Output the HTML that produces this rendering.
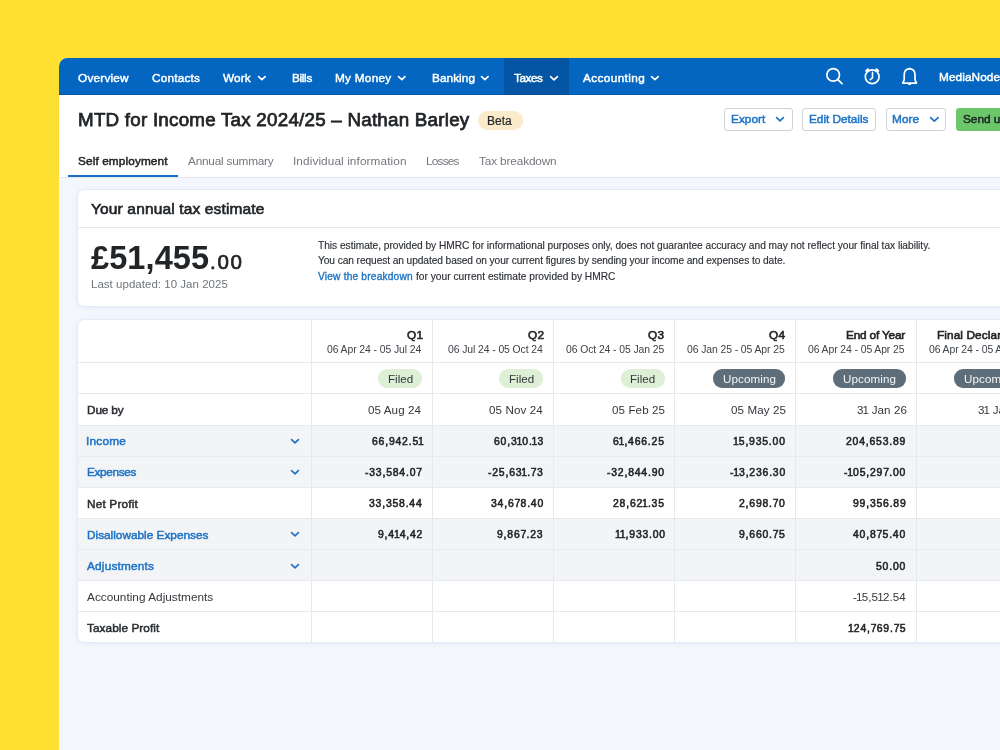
<!DOCTYPE html>
<html><head><meta charset="utf-8"><title>MTD for Income Tax</title><style>
html,body{margin:0;padding:0;}
body{width:1000px;height:750px;overflow:hidden;position:relative;background:#FDE032;font-family:"Liberation Sans", sans-serif;}
.t{position:absolute;white-space:nowrap;will-change:transform;}
.btn{position:absolute;top:108.2px;height:22.5px;box-sizing:border-box;border:1px solid #CDD2D8;border-radius:3px;background:#fff}
.b{position:absolute;top:369.4px;height:18.2px;border-radius:9.1px}
.card{position:absolute;left:78px;width:960px;border-radius:6px;background:#fff;box-shadow:0 0 0 0.5px rgba(210,222,240,0.5),0 1px 6px rgba(110,150,215,0.15)}
</style></head><body>
<div style="position:absolute;left:59px;top:58px;width:1000px;height:720px;background:#F3F7FD;border-top-left-radius:8.5px;overflow:hidden"></div>
<div style="position:absolute;left:59px;top:58px;width:1000px;height:37px;background:#0466C0;border-top-left-radius:8.5px"></div>
<div style="position:absolute;left:504px;top:58px;width:65px;height:37px;background:#0455A3"></div>
<div style="position:absolute;left:59px;top:94px;width:1000px;height:1px;background:rgba(0,50,110,0.28)"></div>
<div style="position:absolute;left:59px;top:95px;width:1000px;height:82px;background:#fff;border-bottom:1px solid #E4E8EE"></div>
<div style="position:absolute;left:68px;top:175px;width:110px;height:2px;background:#1C70C4"></div>
<div style="position:absolute;left:478px;top:111.4px;width:45px;height:18.2px;border-radius:9.1px;background:#FCEBCB"></div>
<div class="btn" style="left:724.3px;width:68.4px"></div>
<div class="btn" style="left:802.3px;width:73.5px"></div>
<div class="btn" style="left:885.5px;width:60.9px"></div>
<div class="btn" style="left:956.2px;width:80px;background:#6CC66A;border-color:#6CC66A"></div>
<div class="card" style="top:190.4px;height:116px"></div>
<div style="position:absolute;left:78px;top:226.5px;width:960px;height:1px;background:#E6E9ED"></div>
<div class="card" style="top:319.7px;height:322.6px"></div>
<div style="position:absolute;left:78px;top:425.000px;width:960px;height:31.000px;background:#F3F4F6"></div><div style="position:absolute;left:78px;top:456.000px;width:960px;height:31.300px;background:#F3F4F6"></div><div style="position:absolute;left:78px;top:518.300px;width:960px;height:31.200px;background:#F3F4F6"></div><div style="position:absolute;left:78px;top:549.500px;width:960px;height:31.300px;background:#F3F4F6"></div><div style="position:absolute;left:311.00px;top:319.7px;width:1px;height:322.6px;background:#E6E9EE"></div><div style="position:absolute;left:432.00px;top:319.7px;width:1px;height:322.6px;background:#E6E9EE"></div><div style="position:absolute;left:553.00px;top:319.7px;width:1px;height:322.6px;background:#E6E9EE"></div><div style="position:absolute;left:674.40px;top:319.7px;width:1px;height:322.6px;background:#E6E9EE"></div><div style="position:absolute;left:795.00px;top:319.7px;width:1px;height:322.6px;background:#E6E9EE"></div><div style="position:absolute;left:915.50px;top:319.7px;width:1px;height:322.6px;background:#E6E9EE"></div><div style="position:absolute;left:78px;top:362.00px;width:960px;height:1px;background:#E6E9EE"></div><div style="position:absolute;left:78px;top:393.00px;width:960px;height:1px;background:#E6E9EE"></div><div style="position:absolute;left:78px;top:424.50px;width:960px;height:1px;background:#E6E9EE"></div><div style="position:absolute;left:78px;top:455.50px;width:960px;height:1px;background:#E6E9EE"></div><div style="position:absolute;left:78px;top:486.80px;width:960px;height:1px;background:#E6E9EE"></div><div style="position:absolute;left:78px;top:517.80px;width:960px;height:1px;background:#E6E9EE"></div><div style="position:absolute;left:78px;top:549.00px;width:960px;height:1px;background:#E6E9EE"></div><div style="position:absolute;left:78px;top:580.30px;width:960px;height:1px;background:#E6E9EE"></div><div style="position:absolute;left:78px;top:611.10px;width:960px;height:1px;background:#E6E9EE"></div>
<div class="b" style="left:378.30px;width:44.2px;background:#DDEFD4"></div><div class="b" style="left:499.30px;width:44.2px;background:#DDEFD4"></div><div class="b" style="left:620.70px;width:44.2px;background:#DDEFD4"></div><div class="b" style="left:712.90px;width:72.6px;background:#5D6D79"></div><div class="b" style="left:833.40px;width:72.6px;background:#5D6D79"></div><div class="b" style="left:954.40px;width:72.6px;background:#5D6D79"></div>
<svg style="position:absolute;left:257.00px;top:75.16px" width="9.80" height="6.29" viewBox="-1 -1 9.80 6.29"><path d="M0.6 0.6 L3.90 3.69 L7.20 0.6" fill="none" stroke="#FFFFFF" stroke-width="1.7" stroke-linecap="round" stroke-linejoin="round"/></svg><svg style="position:absolute;left:397.40px;top:75.21px" width="9.60" height="6.18" viewBox="-1 -1 9.60 6.18"><path d="M0.6 0.6 L3.80 3.58 L7.00 0.6" fill="none" stroke="#FFFFFF" stroke-width="1.7" stroke-linecap="round" stroke-linejoin="round"/></svg><svg style="position:absolute;left:479.70px;top:75.18px" width="9.70" height="6.23" viewBox="-1 -1 9.70 6.23"><path d="M0.6 0.6 L3.85 3.63 L7.10 0.6" fill="none" stroke="#FFFFFF" stroke-width="1.7" stroke-linecap="round" stroke-linejoin="round"/></svg><svg style="position:absolute;left:549.00px;top:75.10px" width="10.00" height="6.40" viewBox="-1 -1 10.00 6.40"><path d="M0.6 0.6 L4.00 3.80 L7.40 0.6" fill="none" stroke="#FFFFFF" stroke-width="1.7" stroke-linecap="round" stroke-linejoin="round"/></svg><svg style="position:absolute;left:650.00px;top:75.16px" width="9.80" height="6.29" viewBox="-1 -1 9.80 6.29"><path d="M0.6 0.6 L3.90 3.69 L7.20 0.6" fill="none" stroke="#FFFFFF" stroke-width="1.7" stroke-linecap="round" stroke-linejoin="round"/></svg><svg style="position:absolute;left:774.70px;top:116.30px" width="10.00" height="6.40" viewBox="-1 -1 10.00 6.40"><path d="M0.6 0.6 L4.00 3.80 L7.40 0.6" fill="none" stroke="#1F74C6" stroke-width="1.7" stroke-linecap="round" stroke-linejoin="round"/></svg><svg style="position:absolute;left:928.50px;top:116.11px" width="10.70" height="6.79" viewBox="-1 -1 10.70 6.79"><path d="M0.6 0.6 L4.35 4.19 L8.10 0.6" fill="none" stroke="#1F74C6" stroke-width="1.7" stroke-linecap="round" stroke-linejoin="round"/></svg><svg style="position:absolute;left:290.00px;top:438.00px" width="10.00" height="6.40" viewBox="-1 -1 10.00 6.40"><path d="M0.6 0.6 L4.00 3.80 L7.40 0.6" fill="none" stroke="#1F74C6" stroke-width="1.7" stroke-linecap="round" stroke-linejoin="round"/></svg><svg style="position:absolute;left:290.00px;top:469.00px" width="10.00" height="6.40" viewBox="-1 -1 10.00 6.40"><path d="M0.6 0.6 L4.00 3.80 L7.40 0.6" fill="none" stroke="#1F74C6" stroke-width="1.7" stroke-linecap="round" stroke-linejoin="round"/></svg><svg style="position:absolute;left:290.00px;top:531.30px" width="10.00" height="6.40" viewBox="-1 -1 10.00 6.40"><path d="M0.6 0.6 L4.00 3.80 L7.40 0.6" fill="none" stroke="#1F74C6" stroke-width="1.7" stroke-linecap="round" stroke-linejoin="round"/></svg><svg style="position:absolute;left:290.00px;top:562.50px" width="10.00" height="6.40" viewBox="-1 -1 10.00 6.40"><path d="M0.6 0.6 L4.00 3.80 L7.40 0.6" fill="none" stroke="#1F74C6" stroke-width="1.7" stroke-linecap="round" stroke-linejoin="round"/></svg>

<svg style="position:absolute;left:820px;top:62px" width="30" height="30" viewBox="0 0 30 30">
 <circle cx="13.2" cy="12.9" r="6.3" fill="none" stroke="#fff" stroke-width="1.7"/>
 <path d="M17.9 17.6 L22 21.6" stroke="#fff" stroke-width="1.8" stroke-linecap="round"/>
</svg>
<svg style="position:absolute;left:857px;top:62px" width="30" height="30" viewBox="0 0 30 30">
 <circle cx="15.2" cy="14.7" r="6.9" fill="none" stroke="#fff" stroke-width="1.7"/>
 <path d="M15.5 10.3 V15.8 L13.2 17.6" fill="none" stroke="#fff" stroke-width="1.6" stroke-linecap="round" stroke-linejoin="round"/>
 <path d="M9.3 8.9 L11 7.4" stroke="#fff" stroke-width="2.2" stroke-linecap="round"/>
 <path d="M21.1 8.9 L19.4 7.4" stroke="#fff" stroke-width="2.2" stroke-linecap="round"/>
</svg>
<svg style="position:absolute;left:895px;top:62px" width="30" height="30" viewBox="0 0 30 30">
 <path d="M14.6 6.7 C11.3 7 9.2 9.6 9.2 13 V17.8 L7.7 21.1 H21.5 L20 17.8 V13 C20 9.6 17.9 7 14.6 6.7 Z" fill="none" stroke="#fff" stroke-width="1.7" stroke-linejoin="round"/>
 <path d="M14.6 5.6 L15.6 6.9 H13.6 Z" fill="#fff"/>
 <path d="M12.8 21.5 A1.8 1.8 0 0 0 16.4 21.5 Z" fill="#fff"/>
</svg>

<div class="t" style="left:77.80px;top:71px;font-size:11.8px;line-height:14.16px;font-weight:normal;color:#FFFFFF;letter-spacing:0.208px;-webkit-text-stroke:0.45px #FFFFFF;">Overview</div><div class="t" style="left:151.70px;top:71px;font-size:11.8px;line-height:14.16px;font-weight:normal;color:#FFFFFF;letter-spacing:0.206px;-webkit-text-stroke:0.45px #FFFFFF;">Contacts</div><div class="t" style="left:223.00px;top:71px;font-size:11.8px;line-height:14.16px;font-weight:normal;color:#FFFFFF;letter-spacing:0.130px;-webkit-text-stroke:0.45px #FFFFFF;">Work</div><div class="t" style="left:291.60px;top:71px;font-size:11.8px;line-height:14.16px;font-weight:normal;color:#FFFFFF;letter-spacing:-0.333px;-webkit-text-stroke:0.45px #FFFFFF;">Bills</div><div class="t" style="left:334.90px;top:71px;font-size:11.8px;line-height:14.16px;font-weight:normal;color:#FFFFFF;letter-spacing:0.255px;-webkit-text-stroke:0.45px #FFFFFF;">My Money</div><div class="t" style="left:431.60px;top:71px;font-size:11.8px;line-height:14.16px;font-weight:normal;color:#FFFFFF;letter-spacing:0.055px;-webkit-text-stroke:0.45px #FFFFFF;">Banking</div><div class="t" style="left:514.00px;top:71px;font-size:11.8px;line-height:14.16px;font-weight:normal;color:#FFFFFF;letter-spacing:-0.480px;-webkit-text-stroke:0.45px #FFFFFF;">Taxes</div><div class="t" style="left:583.00px;top:71px;font-size:11.8px;line-height:14.16px;font-weight:normal;color:#FFFFFF;letter-spacing:0.377px;-webkit-text-stroke:0.45px #FFFFFF;">Accounting</div><div class="t" style="left:938.90px;top:70px;font-size:11.8px;line-height:14.16px;font-weight:normal;color:#FFFFFF;letter-spacing:0.091px;-webkit-text-stroke:0.45px #FFFFFF;">MediaNode</div><div class="t" style="left:77.80px;top:109px;font-size:18.8px;line-height:22.56px;font-weight:normal;color:#222528;letter-spacing:0.232px;-webkit-text-stroke:0.75px #222528;">MTD for Income Tax 2024/25 – Nathan Barley</div><div class="t" style="left:487.40px;top:114px;font-size:12px;line-height:14.40px;font-weight:normal;color:#222528;letter-spacing:-0.004px;-webkit-text-stroke:0.2px #222528;">Beta</div><div class="t" style="left:731.00px;top:112px;font-size:11.8px;line-height:14.16px;font-weight:normal;color:#1F74C6;letter-spacing:0.037px;-webkit-text-stroke:0.5px #1F74C6;">Export</div><div class="t" style="left:809.30px;top:112px;font-size:11.8px;line-height:14.16px;font-weight:normal;color:#1F74C6;letter-spacing:-0.024px;-webkit-text-stroke:0.5px #1F74C6;">Edit Details</div><div class="t" style="left:892.40px;top:112px;font-size:11.8px;line-height:14.16px;font-weight:normal;color:#1F74C6;letter-spacing:0.061px;-webkit-text-stroke:0.5px #1F74C6;">More</div><div class="t" style="left:963.00px;top:112px;font-size:11.8px;line-height:14.16px;font-weight:normal;color:#222528;letter-spacing:0.000px;-webkit-text-stroke:0.5px #222528;">Send updates</div><div class="t" style="left:77.70px;top:154px;font-size:11.8px;line-height:14.16px;font-weight:normal;color:#222528;letter-spacing:0.116px;-webkit-text-stroke:0.5px #222528;">Self employment</div><div class="t" style="left:187.90px;top:154px;font-size:11.8px;line-height:14.16px;font-weight:normal;color:#73787E;letter-spacing:-0.216px;">Annual summary</div><div class="t" style="left:292.50px;top:154px;font-size:11.8px;line-height:14.16px;font-weight:normal;color:#73787E;letter-spacing:0.094px;">Individual information</div><div class="t" style="left:425.50px;top:154px;font-size:11.8px;line-height:14.16px;font-weight:normal;color:#73787E;letter-spacing:-0.776px;">Losses</div><div class="t" style="left:478.90px;top:154px;font-size:11.8px;line-height:14.16px;font-weight:normal;color:#73787E;letter-spacing:-0.140px;">Tax breakdown</div><div class="t" style="left:90.70px;top:200px;font-size:15.5px;line-height:18.60px;font-weight:normal;color:#222528;letter-spacing:0.147px;-webkit-text-stroke:0.65px #222528;">Your annual tax estimate</div><div class="t" style="left:91.10px;top:239px;font-size:32.5px;line-height:39.00px;font-weight:bold;color:#222528;letter-spacing:0.099px;">£51,455</div><div class="t" style="left:209.80px;top:250px;font-size:20.5px;line-height:24.60px;font-weight:normal;color:#222528;letter-spacing:1.752px;-webkit-text-stroke:0.7px #222528;">.00</div><div class="t" style="left:90.80px;top:278px;font-size:11.5px;line-height:13.80px;font-weight:normal;color:#70767D;letter-spacing:0.025px;">Last updated: 10 Jan 2025</div><div class="t" style="left:318.00px;top:240px;font-size:10.2px;line-height:12.24px;font-weight:normal;color:#2C3035;letter-spacing:-0.029px;-webkit-text-stroke:0.15px #2C3035;">This estimate, provided by HMRC for informational purposes only, does not guarantee accuracy and may not reflect your final tax liability.</div><div class="t" style="left:318.00px;top:255px;font-size:10.2px;line-height:12.24px;font-weight:normal;color:#2C3035;letter-spacing:-0.086px;-webkit-text-stroke:0.15px #2C3035;">You can request an updated based on your current figures by sending your income and expenses to date.</div><div class="t" style="left:318.00px;top:271px;font-size:10.2px;line-height:12.24px;font-weight:normal;color:#1F74C6;letter-spacing:0.183px;-webkit-text-stroke:0.35px #1F74C6;">View the breakdown</div><div class="t" style="left:415.80px;top:271px;font-size:10.2px;line-height:12.24px;font-weight:normal;color:#2C3035;letter-spacing:0.002px;-webkit-text-stroke:0.15px #2C3035;">for your current estimate provided by HMRC</div><div class="t" style="left:406.77px;top:328px;font-size:11.8px;line-height:14.16px;font-weight:normal;color:#222528;letter-spacing:0.250px;-webkit-text-stroke:0.6px #222528;">Q1</div><div class="t" style="left:327.20px;top:344px;font-size:10.4px;line-height:12.48px;font-weight:normal;color:#3E4348;letter-spacing:-0.084px;">06 Apr 24 - 05 Jul 24</div><div class="t" style="left:527.77px;top:328px;font-size:11.8px;line-height:14.16px;font-weight:normal;color:#222528;letter-spacing:0.250px;-webkit-text-stroke:0.6px #222528;">Q2</div><div class="t" style="left:448.21px;top:344px;font-size:10.4px;line-height:12.48px;font-weight:normal;color:#3E4348;letter-spacing:-0.084px;">06 Jul 24 - 05 Oct 24</div><div class="t" style="left:648.17px;top:328px;font-size:11.8px;line-height:14.16px;font-weight:normal;color:#222528;letter-spacing:0.250px;-webkit-text-stroke:0.6px #222528;">Q3</div><div class="t" style="left:566.13px;top:344px;font-size:10.4px;line-height:12.48px;font-weight:normal;color:#3E4348;letter-spacing:-0.084px;">06 Oct 24 - 05 Jan 25</div><div class="t" style="left:768.77px;top:328px;font-size:11.8px;line-height:14.16px;font-weight:normal;color:#222528;letter-spacing:0.250px;-webkit-text-stroke:0.6px #222528;">Q4</div><div class="t" style="left:686.73px;top:344px;font-size:10.4px;line-height:12.48px;font-weight:normal;color:#3E4348;letter-spacing:-0.084px;">06 Jan 25 - 05 Apr 25</div><div class="t" style="left:846.20px;top:328px;font-size:11.8px;line-height:14.16px;font-weight:normal;color:#222528;letter-spacing:-0.179px;-webkit-text-stroke:0.6px #222528;">End of Year</div><div class="t" style="left:807.81px;top:344px;font-size:10.4px;line-height:12.48px;font-weight:normal;color:#3E4348;letter-spacing:-0.084px;">06 Apr 24 - 05 Apr 25</div><div class="t" style="left:937.10px;top:328px;font-size:11.8px;line-height:14.16px;font-weight:normal;color:#222528;letter-spacing:0.103px;-webkit-text-stroke:0.6px #222528;">Final Declaration</div><div class="t" style="left:928.81px;top:344px;font-size:10.4px;line-height:12.48px;font-weight:normal;color:#3E4348;letter-spacing:-0.084px;">06 Apr 24 - 05 Apr 25</div><div class="t" style="left:87.30px;top:403px;font-size:11.8px;line-height:14.16px;font-weight:normal;color:#2B2E32;letter-spacing:-0.136px;-webkit-text-stroke:0.5px #2B2E32;">Due by</div><div class="t" style="left:368.29px;top:403px;font-size:11.6px;line-height:13.92px;font-weight:normal;color:#33373B;letter-spacing:0.100px;">05 Aug 24</div><div class="t" style="left:489.30px;top:403px;font-size:11.6px;line-height:13.92px;font-weight:normal;color:#33373B;letter-spacing:0.100px;">05 Nov 24</div><div class="t" style="left:612.34px;top:403px;font-size:11.6px;line-height:13.92px;font-weight:normal;color:#33373B;letter-spacing:0.100px;">05 Feb 25</div><div class="t" style="left:731.01px;top:403px;font-size:11.6px;line-height:13.92px;font-weight:normal;color:#33373B;letter-spacing:0.100px;">05 May 25</div><div class="t" style="left:856.52px;top:403px;font-size:11.6px;line-height:13.92px;font-weight:normal;color:#33373B;letter-spacing:0.100px;"><span style="letter-spacing:-0.900px">3</span><span style="letter-spacing:-0.700px">1</span> Jan 26</div><div class="t" style="left:977.52px;top:403px;font-size:11.6px;line-height:13.92px;font-weight:normal;color:#33373B;letter-spacing:0.100px;"><span style="letter-spacing:-0.900px">3</span><span style="letter-spacing:-0.700px">1</span> Jan 26</div><div class="t" style="left:86.30px;top:434px;font-size:11.8px;line-height:14.16px;font-weight:normal;color:#1F74C6;letter-spacing:0.215px;-webkit-text-stroke:0.5px #1F74C6;">Income</div><div class="t" style="left:371.64px;top:436px;font-size:10.4px;line-height:12.48px;font-weight:normal;color:#222528;letter-spacing:0.814px;-webkit-text-stroke:0.55px #222528;">66,942.<span style="letter-spacing:-0.186px">5</span><span style="letter-spacing:0.014px">1</span></div><div class="t" style="left:493.74px;top:436px;font-size:10.4px;line-height:12.48px;font-weight:normal;color:#222528;letter-spacing:0.814px;-webkit-text-stroke:0.55px #222528;">60,<span style="letter-spacing:-0.186px">3</span><span style="letter-spacing:0.014px">1</span>0<span style="letter-spacing:-0.186px">.</span><span style="letter-spacing:0.014px">1</span>3</div><div class="t" style="left:613.34px;top:436px;font-size:10.4px;line-height:12.48px;font-weight:normal;color:#222528;letter-spacing:0.814px;-webkit-text-stroke:0.55px #222528;"><span style="letter-spacing:-0.186px">6</span><span style="letter-spacing:0.014px">1</span>,466.25</div><div class="t" style="left:732.94px;top:436px;font-size:10.4px;line-height:12.48px;font-weight:normal;color:#222528;letter-spacing:0.814px;-webkit-text-stroke:0.55px #222528;"><span style="letter-spacing:0.014px">1</span>5,935.00</div><div class="t" style="left:846.05px;top:436px;font-size:10.4px;line-height:12.48px;font-weight:normal;color:#222528;letter-spacing:0.814px;-webkit-text-stroke:0.55px #222528;">204,653.89</div><div class="t" style="left:87.30px;top:465px;font-size:11.8px;line-height:14.16px;font-weight:normal;color:#1F74C6;letter-spacing:-0.330px;-webkit-text-stroke:0.5px #1F74C6;">Expenses</div><div class="t" style="left:364.87px;top:467px;font-size:10.4px;line-height:12.48px;font-weight:normal;color:#222528;letter-spacing:0.814px;-webkit-text-stroke:0.55px #222528;">-33,584.0<span style="letter-spacing:0.314px">7</span></div><div class="t" style="left:488.17px;top:467px;font-size:10.4px;line-height:12.48px;font-weight:normal;color:#222528;letter-spacing:0.814px;-webkit-text-stroke:0.55px #222528;">-25,6<span style="letter-spacing:-0.186px">3</span><span style="letter-spacing:0.014px">1</span>.<span style="letter-spacing:0.314px">7</span>3</div><div class="t" style="left:607.27px;top:467px;font-size:10.4px;line-height:12.48px;font-weight:normal;color:#222528;letter-spacing:0.814px;-webkit-text-stroke:0.55px #222528;">-32,844.90</div><div class="t" style="left:729.67px;top:467px;font-size:10.4px;line-height:12.48px;font-weight:normal;color:#222528;letter-spacing:0.814px;-webkit-text-stroke:0.55px #222528;"><span style="letter-spacing:-0.186px">-</span><span style="letter-spacing:0.014px">1</span>3,236.30</div><div class="t" style="left:844.08px;top:467px;font-size:10.4px;line-height:12.48px;font-weight:normal;color:#222528;letter-spacing:0.814px;-webkit-text-stroke:0.55px #222528;"><span style="letter-spacing:-0.186px">-</span><span style="letter-spacing:0.014px">1</span>05,29<span style="letter-spacing:0.314px">7</span>.00</div><div class="t" style="left:87.30px;top:497px;font-size:11.8px;line-height:14.16px;font-weight:normal;color:#2B2E32;letter-spacing:0.179px;-webkit-text-stroke:0.5px #2B2E32;">Net Profit</div><div class="t" style="left:369.14px;top:498px;font-size:10.4px;line-height:12.48px;font-weight:normal;color:#222528;letter-spacing:0.814px;-webkit-text-stroke:0.55px #222528;">33,358.44</div><div class="t" style="left:490.64px;top:498px;font-size:10.4px;line-height:12.48px;font-weight:normal;color:#222528;letter-spacing:0.814px;-webkit-text-stroke:0.55px #222528;">34,6<span style="letter-spacing:0.314px">7</span>8.40</div><div class="t" style="left:613.34px;top:498px;font-size:10.4px;line-height:12.48px;font-weight:normal;color:#222528;letter-spacing:0.814px;-webkit-text-stroke:0.55px #222528;">28,6<span style="letter-spacing:-0.186px">2</span><span style="letter-spacing:0.014px">1</span>.35</div><div class="t" style="left:739.24px;top:498px;font-size:10.4px;line-height:12.48px;font-weight:normal;color:#222528;letter-spacing:0.814px;-webkit-text-stroke:0.55px #222528;">2,698.<span style="letter-spacing:0.314px">7</span>0</div><div class="t" style="left:852.64px;top:498px;font-size:10.4px;line-height:12.48px;font-weight:normal;color:#222528;letter-spacing:0.814px;-webkit-text-stroke:0.55px #222528;">99,356.89</div><div class="t" style="left:87.30px;top:528px;font-size:11.8px;line-height:14.16px;font-weight:normal;color:#1F74C6;letter-spacing:0.004px;-webkit-text-stroke:0.5px #1F74C6;">Disallowable Expenses</div><div class="t" style="left:377.54px;top:529px;font-size:10.4px;line-height:12.48px;font-weight:normal;color:#222528;letter-spacing:0.814px;-webkit-text-stroke:0.55px #222528;">9,<span style="letter-spacing:-0.186px">4</span><span style="letter-spacing:0.014px">1</span>4,42</div><div class="t" style="left:497.24px;top:529px;font-size:10.4px;line-height:12.48px;font-weight:normal;color:#222528;letter-spacing:0.814px;-webkit-text-stroke:0.55px #222528;">9,86<span style="letter-spacing:0.314px">7</span>.23</div><div class="t" style="left:614.91px;top:529px;font-size:10.4px;line-height:12.48px;font-weight:normal;color:#222528;letter-spacing:0.814px;-webkit-text-stroke:0.55px #222528;"><span style="letter-spacing:-0.986px">1</span><span style="letter-spacing:0.014px">1</span>,933.00</div><div class="t" style="left:739.24px;top:529px;font-size:10.4px;line-height:12.48px;font-weight:normal;color:#222528;letter-spacing:0.814px;-webkit-text-stroke:0.55px #222528;">9,660.<span style="letter-spacing:0.314px">7</span>5</div><div class="t" style="left:853.14px;top:529px;font-size:10.4px;line-height:12.48px;font-weight:normal;color:#222528;letter-spacing:0.814px;-webkit-text-stroke:0.55px #222528;">40,8<span style="letter-spacing:0.314px">7</span>5.40</div><div class="t" style="left:87.30px;top:559px;font-size:11.8px;line-height:14.16px;font-weight:normal;color:#1F74C6;letter-spacing:0.199px;-webkit-text-stroke:0.5px #1F74C6;">Adjustments</div><div class="t" style="left:876.12px;top:561px;font-size:10.4px;line-height:12.48px;font-weight:normal;color:#222528;letter-spacing:0.814px;-webkit-text-stroke:0.55px #222528;">50.00</div><div class="t" style="left:87.30px;top:590px;font-size:11.8px;line-height:14.16px;font-weight:normal;color:#33373B;letter-spacing:0.016px;">Accounting Adjustments</div><div class="t" style="left:852.71px;top:590px;font-size:11.6px;line-height:13.92px;font-weight:normal;color:#33373B;letter-spacing:0.100px;"><span style="letter-spacing:-0.900px">-</span><span style="letter-spacing:-0.700px">1</span>5,<span style="letter-spacing:-0.900px">5</span><span style="letter-spacing:-0.700px">1</span>2.54</div><div class="t" style="left:87.30px;top:621px;font-size:11.8px;line-height:14.16px;font-weight:normal;color:#2B2E32;letter-spacing:0.062px;-webkit-text-stroke:0.5px #2B2E32;">Taxable Profit</div><div class="t" style="left:847.85px;top:623px;font-size:10.4px;line-height:12.48px;font-weight:normal;color:#222528;letter-spacing:0.814px;-webkit-text-stroke:0.55px #222528;"><span style="letter-spacing:0.014px">1</span>24,<span style="letter-spacing:0.314px">7</span>69.<span style="letter-spacing:0.314px">7</span>5</div><div class="t" style="left:388.00px;top:372px;font-size:11.6px;line-height:13.92px;font-weight:normal;color:#33383D;letter-spacing:0.005px;">Filed</div><div class="t" style="left:509.00px;top:372px;font-size:11.6px;line-height:13.92px;font-weight:normal;color:#33383D;letter-spacing:0.005px;">Filed</div><div class="t" style="left:630.40px;top:372px;font-size:11.6px;line-height:13.92px;font-weight:normal;color:#33383D;letter-spacing:0.005px;">Filed</div><div class="t" style="left:722.70px;top:372px;font-size:11.6px;line-height:13.92px;font-weight:normal;color:#F4F6F8;letter-spacing:0.122px;">Upcoming</div><div class="t" style="left:843.20px;top:372px;font-size:11.6px;line-height:13.92px;font-weight:normal;color:#F4F6F8;letter-spacing:0.122px;">Upcoming</div><div class="t" style="left:964.20px;top:372px;font-size:11.6px;line-height:13.92px;font-weight:normal;color:#F4F6F8;letter-spacing:0.122px;">Upcoming</div>
</body></html>
